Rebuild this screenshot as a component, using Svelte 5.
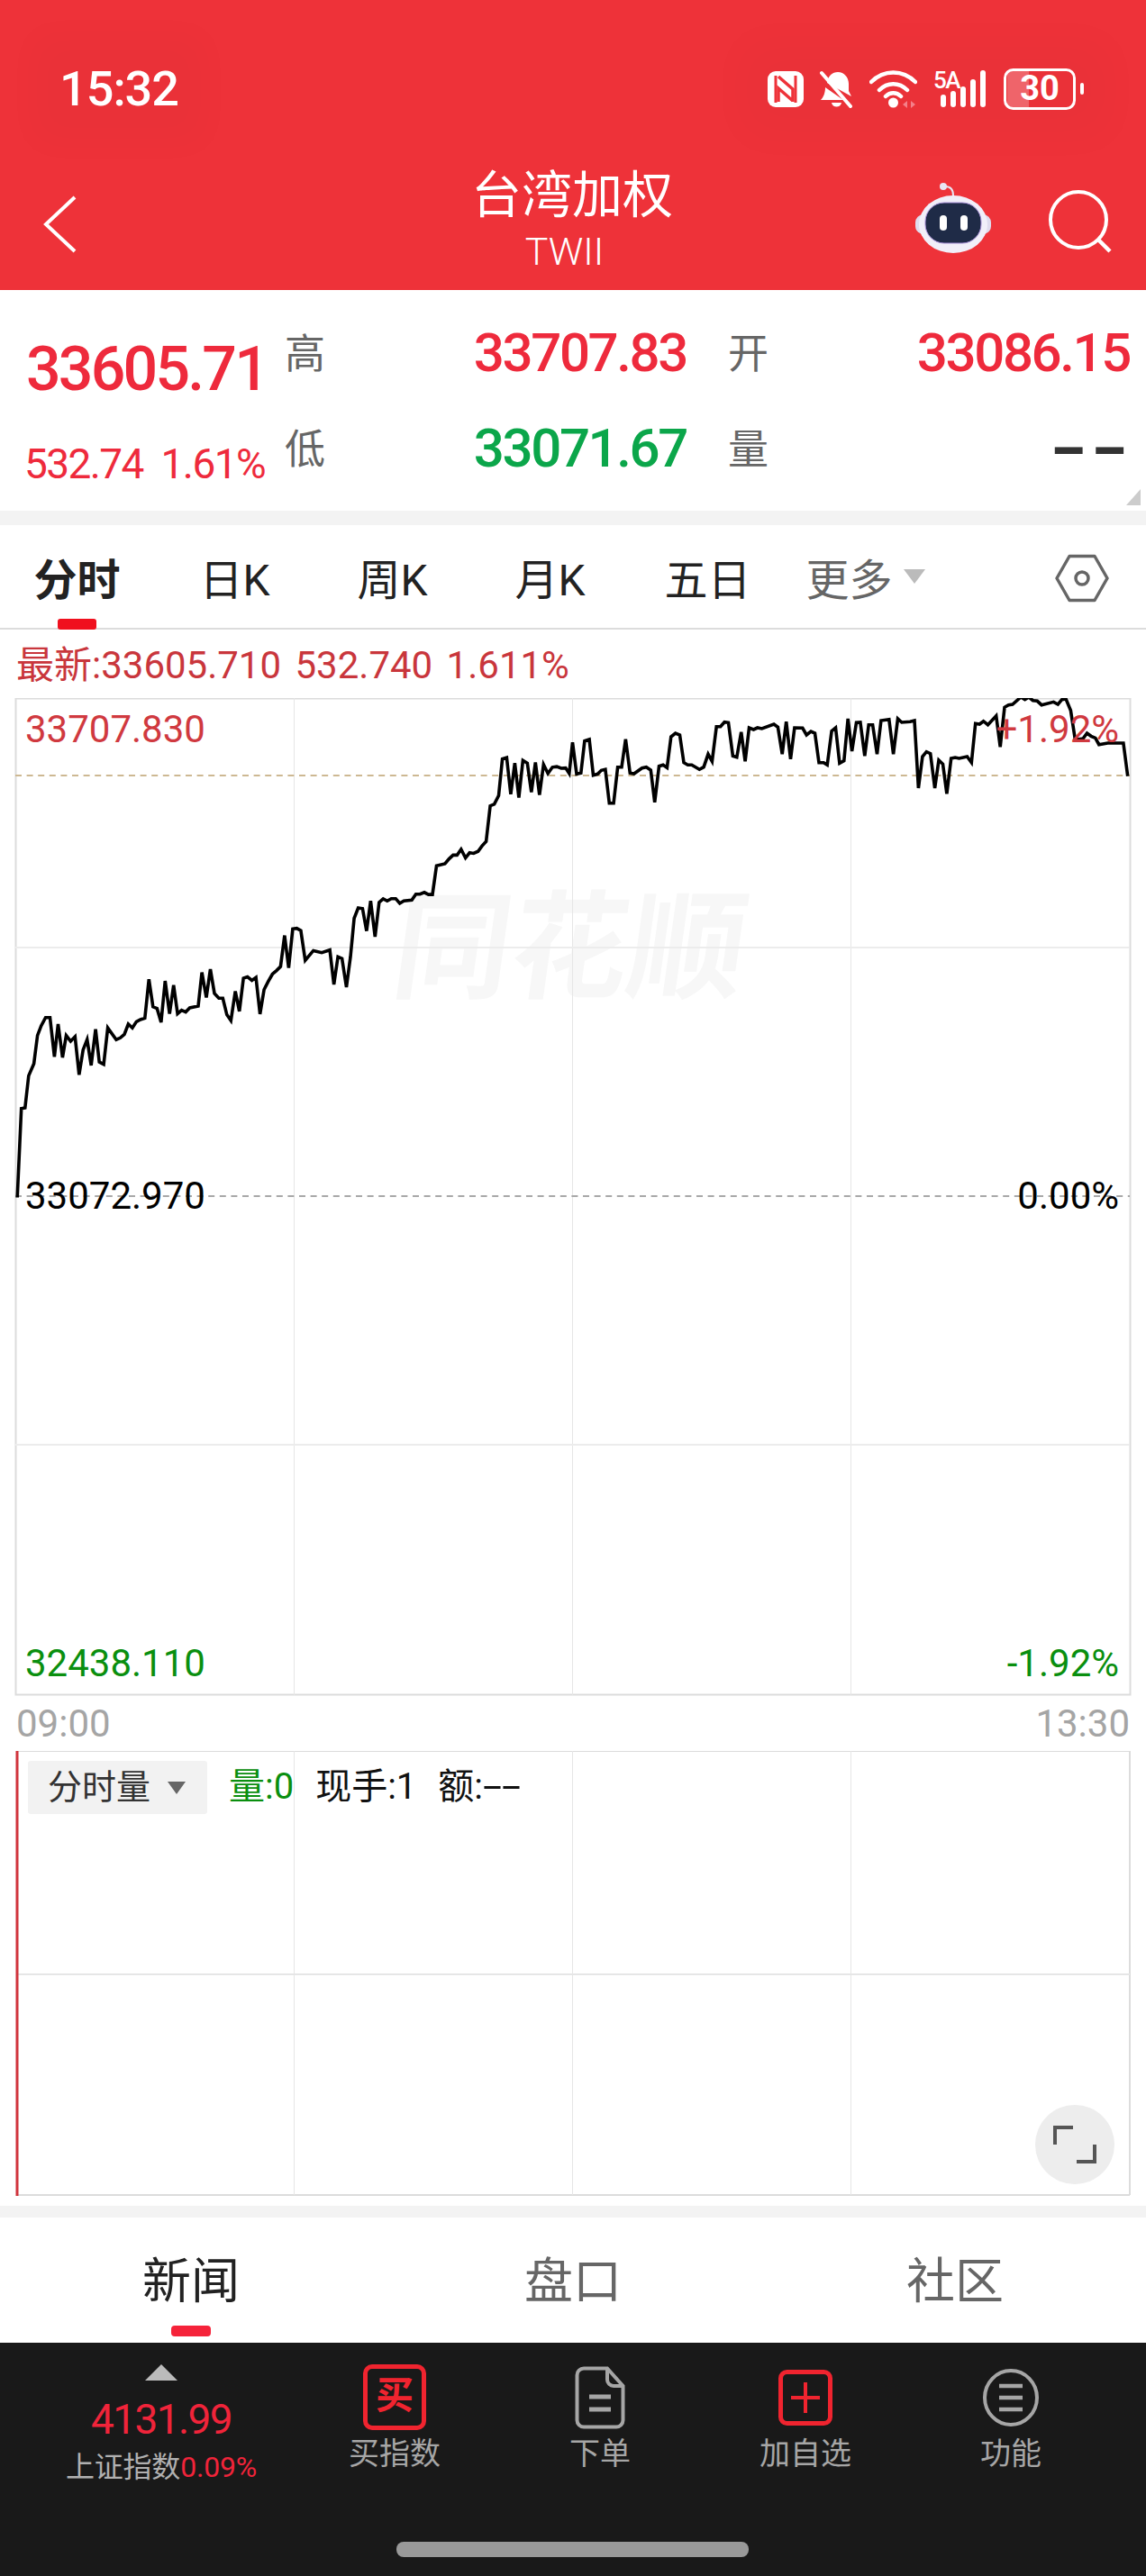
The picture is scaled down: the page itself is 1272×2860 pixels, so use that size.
<script>
	// traced from the reference, first run in one crop's units, second in another
	const runA = [47,1488,58,1230,68,1228,78,1135,92,1100,102,1018,112,990,124,966,136,966,148,1080,158,985,170,1082,180,1018,192,1035,204,1022,215,1132,226,1060,237,1030,248,1105,260,1000,270,1095,282,1102,293,996,316,1030,327,1025,338,1015,349,985,360,996,371,978,382,972,394,968,405,855,416,935,427,940,438,980,449,860,461,955,472,872,483,955,494,945,505,950,516,938,539,933,549,835,561,908,572,826,583,896,595,910,606,910,617,958,628,975,640,890,651,948,662,852,673,848,685,858,696,850,707,956,718,885,729,862,741,840,752,830,763,818,774,728,785,822,796,709,807,707,818,714,830,800,852,772,875,778,897,770,908,870,919,790,930,795,942,878,953,790,963,678,974,648,986,650,997,715,1008,628,1020,732,1031,632,1042,622,1053,628,1064,621,1076,621,1087,635,1098,628,1120,625,1131,608,1142,608,1154,603,1165,609,1176,609,1187,526,1210,520,1221,506,1232,495,1243,495,1254,478,1266,503,1277,488,1288,490,1300,484,1311,468,1322,455,1333,352,1344,347,1356,322,1366,216,1378,212,1389,318,1400,228,1411,328,1422,220,1434,228,1445,312,1456,226,1467,320,1478,232,1490,258,1502,240,1514,238,1526,243,1538,242,1548,258,1557,168];
	const runB = [0,358,12,355,22,248,35,243,46,362,58,358,68,346,79,343,90,455,102,455,113,335,124,335,135,242,147,355,158,357,180,338,192,335,204,345,215,452,227,332,238,328,249,337,260,234,272,222,284,228,295,320,306,328,317,328,338,343,350,335,362,292,373,316,385,200,396,200,407,185,418,187,430,298,441,302,453,218,464,316,475,204,487,210,498,204,510,207,543,192,554,202,566,292,577,184,589,308,600,204,622,205,633,228,645,216,656,222,667,320,680,320,690,328,702,215,713,204,724,322,736,314,747,174,758,282,770,187,781,186,793,298,804,194,815,194,827,292,838,180,860,176,872,292,884,174,895,186,918,184,930,180,941,405,952,300,963,284,974,290,986,405,997,312,1008,325,1019,424,1031,306,1042,303,1053,306,1075,300,1087,320,1098,190,1109,192,1120,182,1132,194,1155,164,1166,268,1178,136,1189,128,1200,126,1223,102,1234,110,1245,102,1256,113,1268,115,1280,128,1313,118,1325,126,1336,110,1347,108,1360,146,1372,240,1383,242,1394,240,1405,222,1416,232,1428,238,1438,260,1462,255,1505,255,1517,365];

	function toPoints(run, sx, sy, ox, oy) {
		const out = [];
		for (let i = 0; i < run.length; i += 2) {
			out.push((ox + run[i] / sx).toFixed(1) + ',' + (oy + run[i + 1] / sy).toFixed(1));
		}
		return out;
	}
	const pricePoints = [...toPoints(runA, 2.45, 2.613, 0, 760), ...toPoints(runB, 2.48, 3, 640, 740)].join(' ');

	const tabs = ['分时', '日K', '周K', '月K', '五日'];
	const vLines = [326, 635, 944];
</script>

<div class="page">
	<header class="top">
		<div class="status">
			<span class="time">15:32</span>
			<div class="icons">
				<svg width="40" height="42" viewBox="0 0 40 42">
					<rect x="0" y="1" width="40" height="40" rx="9" fill="#fff"/>
					<path d="M9 6v30M31 6v30" stroke="#ee3239" stroke-width="3"/>
					<path d="M12 7l16 14v14M12 35V20l16 14" fill="none" stroke="#ee3239" stroke-width="3.5"/>
				</svg>
				<svg width="37" height="42" viewBox="0 0 37 42">
					<path d="M8 14c1-8 6-12 12-12 7 0 12 6 12 13v8l3 6-27-15zM6 19l20 14H1c3-3 5-8 5-14zM13 36h11c-1 6-10 6-11 0z" fill="#fff"/>
					<path d="M2 3l32 37" stroke="#fff" stroke-width="4" stroke-linecap="round"/>
				</svg>
				<svg width="53" height="42" viewBox="0 0 53 42">
					<path d="M2 13c14-14 35-14 49 0M11 22c9-9 22-9 31 0M18 29c5-5 12-5 17 0" fill="none" stroke="#fff" stroke-width="4.5" stroke-linecap="round"/>
					<circle cx="26.500" cy="36" r="5.500" fill="#fff"/>
					<path d="M42 34l-5 4 5 4zM46 34l5 4-5 4z" fill="#f4808a"/>
				</svg>
				<svg class="signal" width="60" height="42" viewBox="0 0 60 42">
					<text x="0" y="20" class="five">5A</text>
					<rect x="8" y="27" width="6" height="14" rx="3" fill="#fff"/>
					<rect x="19" y="23" width="6" height="18" rx="3" fill="#fff"/>
					<rect x="30" y="18" width="6" height="23" rx="3" fill="#fff"/>
					<rect x="41" y="10" width="6" height="31" rx="3" fill="#fff"/>
					<rect x="52" y="0" width="6" height="41" rx="3" fill="#fff"/>
				</svg>
				<svg width="89" height="46" viewBox="0 0 89 46">
					<path d="M4 2h24v42H4z" fill="#fff" opacity=".25"/>
					<rect x="1.500" y="1.500" width="77" height="43" rx="9" fill="none" stroke="#fff" stroke-width="3"/>
					<text x="40" y="35" class="batt">30</text>
					<rect x="85" y="16" width="4" height="13" rx="2" fill="#fff"/>
				</svg>
			</div>
		</div>
		<nav class="nav">
			<div class="back">
				<svg width="38" height="64" viewBox="0 0 38 64">
					<path d="M35 2L3 32l32 30" fill="none" stroke="#fff" stroke-width="4"/>
				</svg>
			</div>
			<div class="title">
				<div class="name">台湾加权</div>
				<div class="code">TWII</div>
			</div>
			<div class="tools">
				<svg width="84" height="78" viewBox="0 0 84 78">
					<circle cx="31" cy="4" r="4" fill="#e8e6f4"/>
					<path d="M33 4c6 0 9 3 9 10" fill="none" stroke="#e8e6f4" stroke-width="2"/>
					<rect x="0" y="35" width="84" height="22" rx="9" fill="#dfdcee"/>
					<ellipse cx="42" cy="46" rx="38" ry="32" fill="#f1eff9"/>
					<rect x="11" y="22" width="62" height="45" rx="21" fill="#1f2b47" stroke="#a890d8" stroke-width="1"/>
					<rect x="27" y="36" width="8" height="17" rx="4" fill="#fff"/>
					<rect x="50" y="36" width="8" height="17" rx="4" fill="#fff"/>
				</svg>
				<svg width="70" height="70" viewBox="0 0 70 70">
					<circle cx="33" cy="33" r="31" fill="none" stroke="#fff" stroke-width="4"/>
					<path d="M55 55l13 13" stroke="#fff" stroke-width="4.500"/>
				</svg>
			</div>
		</nav>
	</header>

	<section class="stats">
		<div class="price">
			<div class="last">33605.71</div>
			<div class="chg"><span>532.74</span><span>1.61%</span></div>
		</div>
		<div class="cells">
			<span class="lab">高</span><span class="val up">33707.83</span>
			<span class="lab">开</span><span class="val up">33086.15</span>
			<span class="lab">低</span><span class="val down">33071.67</span>
			<span class="lab">量</span><span class="val none"><b>--</b></span>
		</div>
		<i class="corner"></i>
	</section>
	<div class="band"></div>

	<div class="tabs">
		{#each tabs as t, i}
			<div class="tab" class:on={i === 0}>{t}</div>
		{/each}
		<div class="tab more">更多<i class="caret"></i></div>
		<svg class="hex" width="60" height="54" viewBox="0 0 60 54">
			<path d="M16 2.500h28L58 27 44 51.500H16L2 27z" fill="none" stroke="#666" stroke-width="3.500" stroke-linejoin="round"/>
			<circle cx="30" cy="27" r="7" fill="none" stroke="#666" stroke-width="3.500"/>
		</svg>
	</div>

	<div class="latest">最新:33605.710 532.740 1.611%</div>

	<div class="chart">
		<div class="mark">同花顺</div>
		<svg class="plot" width="1272" height="1108" viewBox="0 775 1272 1108">
			<rect x="17.500" y="775.500" width="1237" height="1106" fill="none" stroke="#dcdcdc" stroke-width="2"/>
			{#each vLines as x}
				<path d="M{x + 0.5} 775V1882" stroke="#e6e6e6"/>
			{/each}
			<path d="M17 1052H1254M17 1604H1254" stroke="#ececec" stroke-width="2"/>
			<path d="M17 861H1254" stroke="#cdb892" stroke-width="2" stroke-dasharray="7 5.600"/>
			<path d="M17 1328H1254" stroke="#a8a8a8" stroke-width="2" stroke-dasharray="7 5.600"/>
			<polyline points={pricePoints} fill="none" stroke="#000" stroke-width="3.600" stroke-linejoin="miter"/>
		</svg>
		<span class="lbl tl red">33707.830</span>
		<span class="lbl tr red">+1.92%</span>
		<span class="lbl ml">33072.970</span>
		<span class="lbl mr">0.00%</span>
		<span class="lbl bl green">32438.110</span>
		<span class="lbl br green">-1.92%</span>
	</div>

	<div class="times"><span>09:00</span><span>13:30</span></div>

	<div class="volume">
		<svg width="1272" height="494" viewBox="0 1944 1272 494">
			<path d="M18 1944H1254M18 2437H1254" stroke="#dcdcdc" stroke-width="2"/>
			<path d="M1254 1944V2437" stroke="#dcdcdc" stroke-width="2"/>
			{#each vLines as x}
				<path d="M{x + 0.5} 1944V2437" stroke="#e6e6e6"/>
			{/each}
			<path d="M18 2192H1254" stroke="#e6e6e6" stroke-width="2"/>
			<path d="M19 1941V2438" stroke="#d0343c" stroke-width="3"/>
		</svg>
		<div class="legend">
			<div class="pick"><span>分时量</span><i class="caret dark"></i></div>
			<span class="green">量:0</span>
			<span>现手:1</span>
			<span>额:<b class="dash">--</b></span>
		</div>
		<div class="expand">
			<svg width="48" height="44" viewBox="0 0 48 44">
				<path d="M2 22V3h20M46 22v19H26" fill="none" stroke="#555" stroke-width="4"/>
			</svg>
		</div>
	</div>
	<div class="band low"></div>

	<div class="news">
		<div class="ntab on">新闻</div>
		<div class="ntab">盘口</div>
		<div class="ntab">社区</div>
	</div>

	<footer class="bar">
		<div class="index">
			<i class="arrow"></i>
			<div class="num">4131.99</div>
			<div class="sub">上证指数<em>0.09%</em></div>
		</div>
		<div class="act">
			<div class="ico"><div class="buy">买</div></div>
			<span>买指数</span>
		</div>
		<div class="act">
			<div class="ico">
				<svg width="56" height="70" viewBox="0 0 56 70">
					<path d="M10 2.500h26L53.500 22v38a7.500 7.500 0 0 1-7.500 7.500H10A7.500 7.500 0 0 1 2.500 60V10A7.500 7.500 0 0 1 10 2.500z" fill="none" stroke="#a6a6a6" stroke-width="4"/>
					<path d="M36 3v12a7 7 0 0 0 7 7h10" fill="none" stroke="#a6a6a6" stroke-width="4"/>
					<path d="M16 34h24M16 48h24" stroke="#a6a6a6" stroke-width="5"/>
				</svg>
			</div>
			<span>下单</span>
		</div>
		<div class="act">
			<div class="ico">
				<svg width="60" height="62" viewBox="0 0 60 62">
					<rect x="2.500" y="2.500" width="55" height="57" rx="7" fill="none" stroke="#f0242f" stroke-width="5"/>
					<path d="M30 14v34M14 31h32" stroke="#f0242f" stroke-width="4"/>
				</svg>
			</div>
			<span>加自选</span>
		</div>
		<div class="act">
			<div class="ico">
				<svg width="62" height="64" viewBox="0 0 62 64">
					<ellipse cx="31" cy="32" rx="29" ry="30" fill="none" stroke="#a6a6a6" stroke-width="4"/>
					<path d="M18 19h26M18 32h26M18 45h26" stroke="#a6a6a6" stroke-width="4.500"/>
				</svg>
			</div>
			<span>功能</span>
		</div>
		<div class="home"></div>
	</footer>
</div>

<style>
	:global(body) {
		margin: 0;
		background: #fff;
	}
	.page {
		width: 1272px;
		height: 2860px;
		display: flex;
		flex-direction: column;
		overflow: hidden;
		font-family: Roboto, "Noto Sans CJK SC", sans-serif;
		color: #000;
	}
	i, em {
		font-style: normal;
	}
	svg {
		display: block;
	}

	/* red header */
	.top {
		height: 322px;
		background: #ee3239;
		color: #fff;
		box-sizing: border-box;
		padding-top: 76px;
	}
	.status {
		display: flex;
		align-items: center;
		justify-content: space-between;
		height: 45px;
		padding: 0 69px 0 66px;
	}
	.time {
		font-size: 54px;
		font-weight: 500;
		letter-spacing: -1px;
		line-height: 60px;
		background: rgba(0, 0, 0, 0.015);
		box-shadow: 0 0 40px 30px rgba(0, 0, 0, 0.018);
	}
	.icons {
		display: flex;
		align-items: center;
		gap: 18px;
		background: rgba(0, 0, 0, 0.015);
		box-shadow: 0 0 50px 30px rgba(0, 0, 0, 0.018);
	}
	.signal {
		overflow: visible;
	}
	.five {
		font: 500 26px Roboto, sans-serif;
		fill: #fff;
		letter-spacing: -1.5px;
	}
	.batt {
		font: 700 38px Roboto, sans-serif;
		fill: #fff;
		text-anchor: middle;
	}
	.nav {
		display: grid;
		grid-template-columns: 1fr auto 1fr;
		margin-top: 66px;
	}
	.back {
		padding: 30px 0 0 48px;
	}
	.title {
		text-align: center;
	}
	.name {
		font-size: 56px;
		line-height: 60px;
		margin-right: 2px;
	}
	.code {
		font-size: 43px;
		line-height: 40px;
		margin: 12px 19px 0 0;
		font-weight: 300;
	}
	.tools {
		display: flex;
		justify-content: flex-end;
		align-items: flex-start;
		gap: 64px;
		padding: 16px 38px 0 0;
	}
	.tools svg + svg {
		margin-top: 8px;
	}

	/* quote block */
	.stats {
		height: 245px;
		display: flex;
		position: relative;
		flex: none;
	}
	.price {
		width: 316px;
		box-sizing: border-box;
		padding: 48px 0 0 29px;
	}
	.last {
		font-size: 68px;
		font-weight: 500;
		line-height: 80px;
		letter-spacing: -2.8px;
		color: #ee2a3c;
	}
	.chg {
		display: flex;
		justify-content: space-between;
		width: 267px;
		margin: 35px 0 0 -2px;
		font-size: 46px;
		line-height: 60px;
		letter-spacing: -1.6px;
		color: #ee2a3c;
	}
	.cells {
		flex: 1;
		display: grid;
		grid-template-columns: 45px 401px 91px 1fr;
		grid-auto-rows: 106px;
		padding: 16px 18px 0 0;
		align-items: center;
	}
	.lab {
		font-size: 45px;
		line-height: 56px;
		padding-top: 5px;
		color: #666;
		text-align: right;
	}
	.val {
		text-align: right;
		font-size: 60px;
		font-weight: 500;
		letter-spacing: -2.4px;
	}
	.up {
		color: #ee2a3c;
	}
	.down {
		color: #0ba64a;
	}
	.none {
		color: #333;
	}
	.none b {
		display: inline-block;
		font-weight: 900;
		letter-spacing: -1px;
		transform: scaleX(1.75);
		transform-origin: right center;
	}
	.corner {
		position: absolute;
		right: 6px;
		bottom: 6px;
		border-style: solid;
		border-width: 0 0 18px 16px;
		border-color: transparent transparent #ccc transparent;
	}
	.band {
		height: 16px;
		flex: none;
		background: #f3f3f3;
	}
	.band.low {
		height: 13px;
		margin-top: 11px;
	}

	/* period tabs */
	.tabs {
		height: 116px;
		flex: none;
		box-sizing: border-box;
		border-bottom: 2px solid #dcdcdc;
		display: flex;
		align-items: center;
	}
	.tab {
		width: 175px;
		text-align: center;
		font-size: 48px;
		color: #222;
		position: relative;
	}
	.tab:first-child {
		margin-left: -2px;
	}
	.tab.on {
		font-weight: 700;
	}
	.tab.on::after {
		content: "";
		position: absolute;
		left: 66px;
		width: 43px;
		bottom: -24px;
		height: 12px;
		border-radius: 3px;
		background: #f0101e;
	}
	.tab.more {
		color: #666;
		display: flex;
		justify-content: center;
		align-items: center;
	}
	.caret {
		display: inline-block;
		margin-left: 12px;
		border-style: solid;
		border-width: 16px 12px 0;
		border-color: #bbb transparent transparent;
	}
	.caret.dark {
		border-width: 14px 10px 0;
		border-color: #666 transparent transparent;
		margin-left: 19px;
	}
	.hex {
		margin: 4px 41px 0 auto;
	}
	.latest {
		height: 76px;
		box-sizing: border-box;
		padding: 0 0 6px 18px;
		flex: none;
		display: flex;
		align-items: center;
		font-size: 42px;
		word-spacing: 5px;
		color: #c9363c;
		white-space: pre;
	}

	/* charts */
	.chart {
		height: 1108px;
		flex: none;
		position: relative;
	}
	.plot {
		position: relative;
	}
	.mark {
		position: absolute;
		left: 438px;
		top: 209px;
		font-size: 130px;
		line-height: 140px;
		font-weight: 700;
		color: #f7f7f7;
		transform: skewX(-8deg);
	}
	.lbl {
		position: absolute;
		font-size: 42px;
		line-height: 50px;
	}
	.red {
		color: #d0393f;
	}
	.green {
		color: #0a8f0f;
	}
	.tl, .ml, .bl {
		left: 28px;
	}
	.tr, .mr, .br {
		right: 30px;
	}
	.tl, .tr {
		top: 10px;
	}
	.ml, .mr {
		top: 528px;
	}
	.bl, .br {
		top: 1047px;
	}
	.times {
		height: 61px;
		flex: none;
		display: flex;
		justify-content: space-between;
		align-items: center;
		padding: 0 18px;
		font-size: 42px;
		color: #a5a5a5;
	}
	.volume {
		height: 494px;
		flex: none;
		position: relative;
	}
	.legend {
		position: absolute;
		left: 31px;
		top: 11px;
		display: flex;
		align-items: center;
		gap: 24px;
		font-size: 40px;
		line-height: 54px;
		color: #111;
	}
	.legend > span {
		padding-top: 1px;
		padding-bottom: 2px;
	}
	.dash {
		display: inline-block;
		font-weight: 400;
		transform: scaleX(1.9);
		transform-origin: left center;
	}
	.pick {
		width: 199px;
		height: 59px;
		box-sizing: border-box;
		padding: 0 0 0 22px;
		display: flex;
		align-items: center;
		background: #f2f2f2;
		border-radius: 3px;
		font-size: 38px;
		color: #333;
	}
	.pick span {
		padding-bottom: 2px;
	}
	.expand {
		position: absolute;
		right: 35px;
		top: 393px;
		width: 88px;
		height: 88px;
		border-radius: 50%;
		background: #ededed;
		display: flex;
		align-items: center;
		justify-content: center;
	}

	/* content tabs */
	.news {
		height: 139px;
		flex: none;
		display: grid;
		grid-template-columns: repeat(3, 1fr);
		align-items: center;
		padding-bottom: 6px;
		box-sizing: border-box;
	}
	.ntab {
		text-align: center;
		font-size: 54px;
		color: #666;
		position: relative;
	}
	.ntab.on {
		color: #222;
	}
	.ntab.on::after {
		content: "";
		position: absolute;
		left: 190px;
		width: 44px;
		bottom: -26px;
		height: 12px;
		border-radius: 4px;
		background: #f5233a;
	}

	/* dark bottom bar */
	.bar {
		flex: 1;
		background: #191919;
		display: flex;
		padding: 24px 0 0 65px;
		position: relative;
	}
	.index {
		width: 228px;
		margin-right: 31px;
		display: flex;
		flex-direction: column;
		align-items: center;
	}
	.arrow {
		border-style: solid;
		border-width: 0 18px 18px;
		border-color: transparent transparent #bbb;
	}
	.num {
		font-size: 46px;
		line-height: 50px;
		margin-top: 18px;
		color: #f0243a;
		letter-spacing: -1.6px;
	}
	.sub {
		font-size: 32px;
		line-height: 40px;
		margin-top: 8px;
		color: #b0b0b0;
		white-space: nowrap;
		letter-spacing: -0.2px;
	}
	.sub em {
		color: #f0243a;
	}
	.act {
		width: 228px;
		display: flex;
		flex-direction: column;
		align-items: center;
		font-size: 34px;
		line-height: 36px;
		color: #a6a6a6;
	}
	.act span {
		padding-top: 2px;
	}
	.ico {
		height: 73px;
		margin-bottom: 6px;
		display: flex;
		align-items: center;
	}
	.buy {
		width: 70px;
		height: 73px;
		box-sizing: border-box;
		border: 5px solid #f0242f;
		border-radius: 10px;
		color: #f0242f;
		font-size: 42px;
		font-weight: 700;
		line-height: 60px;
		text-align: center;
	}
	.home {
		position: absolute;
		left: 440px;
		top: 221px;
		width: 391px;
		height: 17px;
		border-radius: 8px;
		background: #999;
	}
</style>
